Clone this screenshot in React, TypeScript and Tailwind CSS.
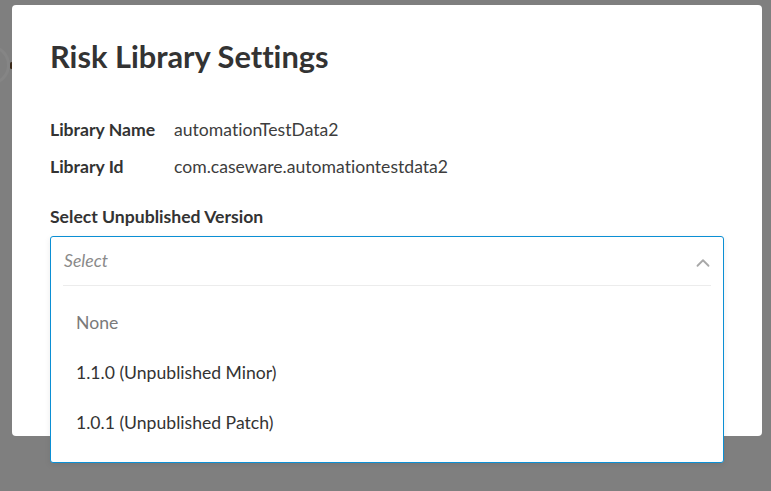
import { ChevronUp } from "lucide-react";

const options = [
  { label: "None", muted: true },
  { label: "1.1.0 (Unpublished Minor)", muted: false },
  { label: "1.0.1 (Unpublished Patch)", muted: false },
];

function InfoRow({ label, value }: { label: string; value: string }) {
  return (
    <div className="flex h-[37px] items-center">
      <span className="w-[124px] text-[17.6px] font-bold text-[#333333]">{label}</span>
      <span className="text-[17.6px] text-[#3d3d3d]">{value}</span>
    </div>
  );
}

export default function App() {
  return (
    <div
      className="relative h-[491px] w-[771px] overflow-hidden bg-[#7f7f7f] [font-variant-ligatures:none]"
      style={{ fontFamily: "Lato, 'Open Sans', sans-serif" }}
    >
      {/* page content peeking behind the overlay */}
      <div className="absolute left-[-30px] top-[45px] h-[40px] w-[40px] rounded-full border-[3px] border-[#858585]" />
      <div className="absolute left-[10px] top-[62px] h-[7px] w-[3px] rounded-full bg-[#3a2a1a]" />

      <div className="relative ml-[12px] mt-[5px] h-[431px] w-[750px] rounded-[4px] bg-white px-[38px] pt-[34px]">
        <h1 className="text-[30.8px] font-bold leading-[36px] text-[#333333]">Risk Library Settings</h1>

        <div className="mt-[37px]">
          <InfoRow label="Library Name" value="automationTestData2" />
          <InfoRow label="Library Id" value="com.caseware.automationtestdata2" />
        </div>

        <div className="mt-[19px] text-[17.6px] font-bold leading-[24px] text-[#333333]">
          Select Unpublished Version
        </div>

        <div className="relative mt-[7px] h-[50px]">
          <div className="absolute left-0 right-0 top-0 z-10 rounded-[3px] border border-[#0b8fd4] bg-white shadow-[0_2px_6px_rgba(0,0,0,0.08)]">
            <div className="mx-[12px] flex h-[49px] items-center justify-between border-b border-[#ececec] pl-px">
              <span className="text-[17.6px] italic text-[#8a8a8a]">Select</span>
              <ChevronUp size={22} strokeWidth={2} className="mr-[-3px] mt-[3px] text-[#a8a8a8]" />
            </div>
            <ul className="pb-[14px] pt-[12px]">
              {options.map((o) => (
                <li
                  key={o.label}
                  className={`flex h-[50px] items-center px-[25px] text-[17.6px] ${
                    o.muted ? "text-[#7a7a7a]" : "text-[#333333]"
                  }`}
                >
                  {o.label}
                </li>
              ))}
            </ul>
          </div>
        </div>
      </div>
    </div>
  );
}
